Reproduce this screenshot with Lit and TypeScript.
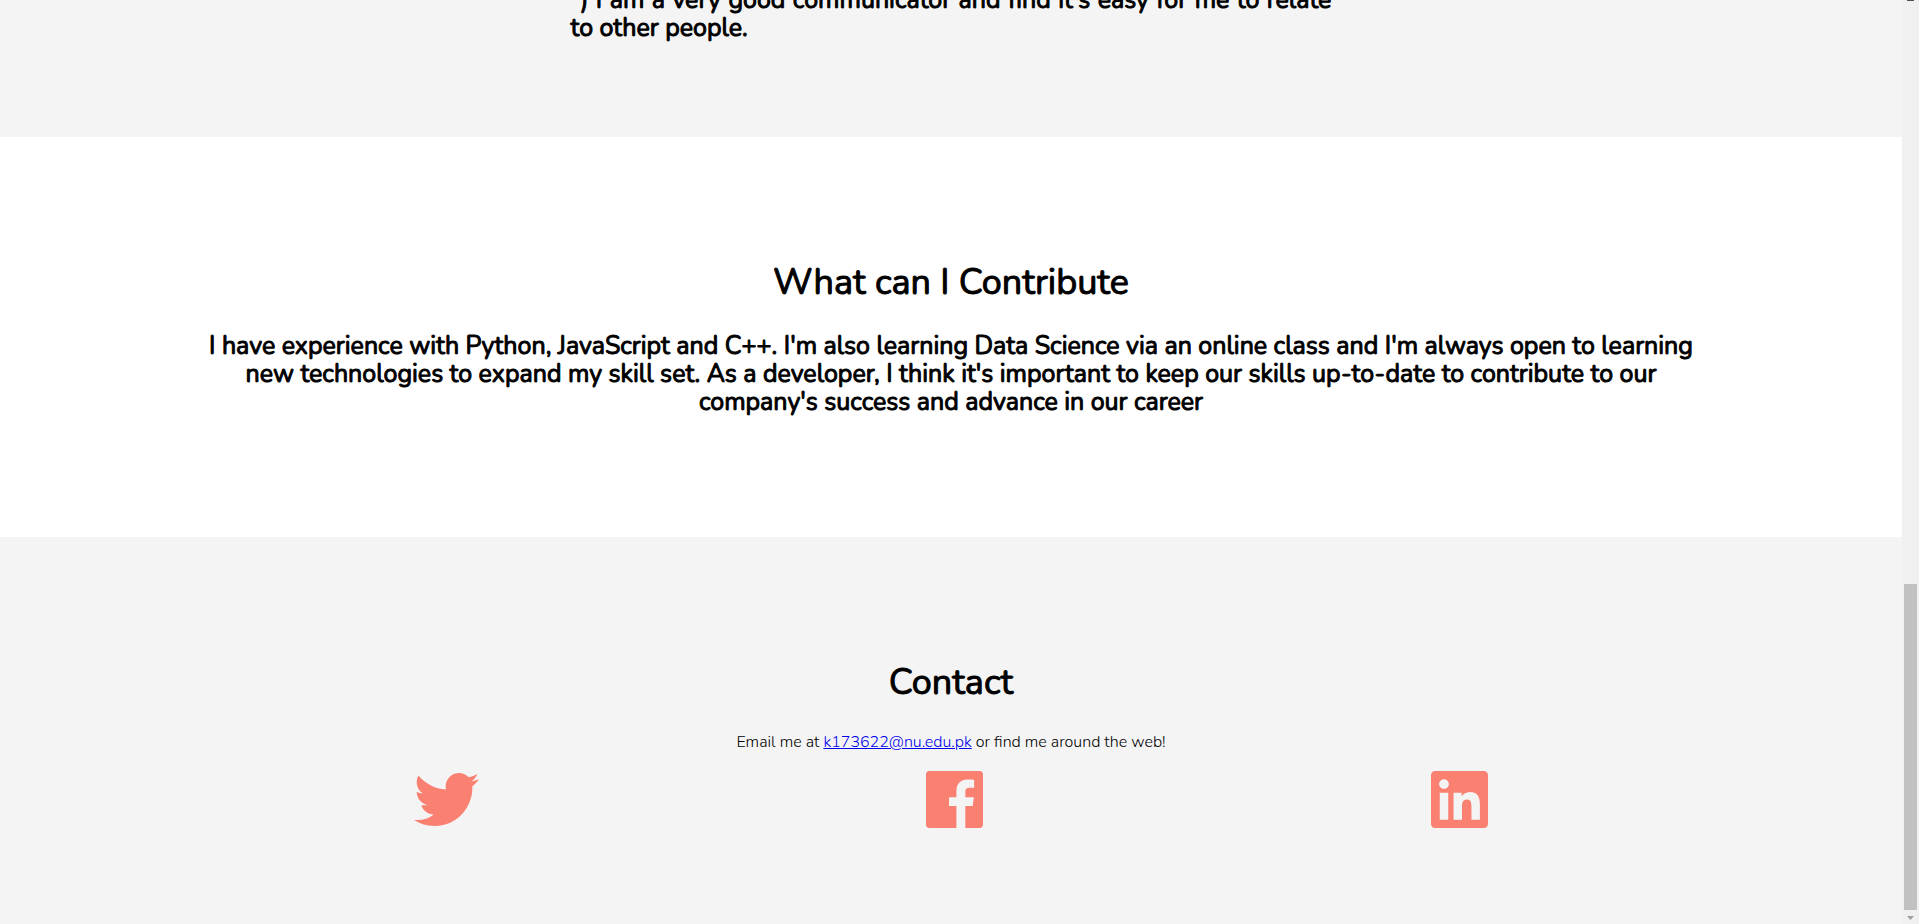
import { LitElement, html, css, svg } from "lit";
import { customElement } from "lit/decorators.js";

interface Social {
  name: string;
  href: string;
  kind: string;
  viewBox: string;
  path: string;
}

const SOCIALS: Social[] = [
  {
    name: "Twitter",
    href: "#twitter",
    kind: "bird",
    viewBox: "0 48 512 416",
    path: "M459.37 151.716c.325 4.548.325 9.097.325 13.645 0 138.72-105.583 298.558-298.558 298.558-59.452 0-114.68-17.219-161.137-47.106 8.447.974 16.568 1.299 25.34 1.299 49.055 0 94.213-16.568 130.274-44.832-46.132-.975-84.792-31.188-98.112-72.772 6.498.974 12.995 1.624 19.818 1.624 9.421 0 18.843-1.3 27.614-3.573-48.081-9.747-84.143-51.98-84.143-102.985v-1.299c13.969 7.797 30.214 12.67 47.431 13.319-28.264-18.843-46.781-51.005-46.781-87.391 0-19.492 5.197-37.36 14.294-52.954 51.655 63.675 129.3 105.258 216.365 109.807-1.624-7.797-2.599-15.918-2.599-24.04 0-57.828 46.782-104.934 104.934-104.934 30.213 0 57.502 12.67 76.67 33.137 23.715-4.548 46.456-13.32 66.599-25.34-7.798 24.366-24.366 44.833-46.132 57.827 21.117-2.273 41.584-8.122 60.426-16.243-14.292 20.791-32.161 39.308-52.628 54.253z",
  },
  {
    name: "Facebook",
    href: "#facebook",
    kind: "square",
    viewBox: "0 32 448 448",
    path: "M448 56.7v398.5c0 13.7-11.1 24.7-24.7 24.7H309.1V306.5h58.2l8.7-67.6h-67v-43.2c0-19.6 5.4-32.9 33.5-32.9h35.8v-60.5c-6.2-.8-27.4-2.7-52.2-2.7-51.6 0-87 31.5-87 89.4v49.9h-58.4v67.6h58.4V480H24.7C11.1 480 0 468.9 0 455.3V56.7C0 43.1 11.1 32 24.7 32h398.5c13.7 0 24.8 11.1 24.8 24.7z",
  },
  {
    name: "LinkedIn",
    href: "#linkedin",
    kind: "square",
    viewBox: "0 32 448 448",
    path: "M416 32H31.9C14.3 32 0 46.5 0 64.3v383.4C0 465.5 14.3 480 31.9 480H416c17.6 0 32-14.5 32-32.3V64.3c0-17.8-14.4-32.3-32-32.3zM135.4 416H69V202.2h66.5V416zm-33.2-243c-21.3 0-38.5-17.3-38.5-38.5S80.9 96 102.2 96c21.2 0 38.5 17.3 38.5 38.5 0 21.3-17.2 38.5-38.5 38.5zm282.1 243h-66.4V312c0-24.8-.5-56.7-34.5-56.7-34.6 0-39.9 27-39.9 54.9V416h-66.4V202.2h63.7v29.2h.9c8.9-16.8 30.6-34.5 62.9-34.5 67.2 0 79.7 44.3 79.7 101.9V416z",
  },
];

@customElement("app-root")
export class AppRoot extends LitElement {
  static styles = css`
    :host {
      display: flex;
      height: 100vh;
      overflow: hidden;
      background: #fff;
      color: #000;
      font-family: "Nunito", "Open Sans", sans-serif;
      font-weight: 300;
      font-size: 16px;
      line-height: 20px;
    }

    /* The page rests at the end of its scroll range. */
    main {
      flex: 1;
      min-width: 0;
      display: flex;
      flex-direction: column;
      justify-content: flex-end;
      overflow: hidden;
    }

    section {
      flex: none;
      padding: 5% 10%;
      text-align: center;
    }

    .tinted {
      background: #f4f4f4;
    }

    .about {
      padding: 5% 30%;
      text-align: justify;
    }

    h2,
    .lead {
      font-weight: 400;
      -webkit-text-stroke: 1px currentColor;
    }

    h2 {
      margin: 31px 0 29px;
      font-size: 36px;
      line-height: 40px;
    }

    .lead {
      margin: 0 0 26px;
      font-size: 25px;
      line-height: 28px;
    }

    .about .lead {
      margin: 0;
    }

    .email {
      margin: 0 0 16px;
    }

    .email a {
      color: #0000ee;
    }

    .socials {
      display: flex;
      justify-content: space-around;
      align-items: center;
      margin: 0;
      padding: 3px 0 1px;
      list-style: none;
    }

    .socials a {
      display: block;
      color: salmon;
    }

    .icon {
      display: block;
      fill: currentColor;
    }

    .bird {
      width: 65px;
      height: 53px;
    }

    .square {
      width: 57px;
      height: 57px;
    }

    .scrollbar {
      flex: none;
      width: 17px;
      display: flex;
      flex-direction: column;
      align-items: center;
      background: #f0f0f0;
    }

    .up {
      width: 7px;
      height: 1px;
      background: #505050;
    }

    .track {
      flex: 1;
      align-self: stretch;
      display: grid;
      grid-template-rows: 583fr 326fr;
      padding: 0 2px;
    }

    .thumb {
      grid-row: 2;
      background: #c1c1c1;
    }

    .down {
      display: block;
      width: 7px;
      height: 4px;
      padding: 6px 0 4px;
      fill: #a0a0a0;
    }
  `;

  render() {
    return html`
      <main>
        <section class="tinted about">
          <p class="lead">
            ") I am a very good communicator and find it's easy for me to relate
            to other people.
          </p>
        </section>

        <section>
          <h2>What can I Contribute</h2>
          <p class="lead">
            I have experience with Python, JavaScript and C++. I'm also learning
            Data Science via an online class and I'm always open to learning new
            technologies to expand my skill set. As a developer, I think it's
            important to keep our skills up-to-date to contribute to our
            company's success and advance in our career
          </p>
        </section>

        <section class="tinted">
          <h2>Contact</h2>
          <p class="email">
            Email me at
            <a href="mailto:k173622@nu.edu.pk">k173622@nu.edu.pk</a> or find me
            around the web!
          </p>
          <ul class="socials">
            ${SOCIALS.map(
              (s) => html`<li>
                <a href=${s.href} aria-label=${s.name}>
                  <svg class="icon ${s.kind}" viewBox=${s.viewBox} aria-hidden="true">
                    ${svg`<path d=${s.path}></path>`}
                  </svg>
                </a>
              </li>`
            )}
          </ul>
        </section>
      </main>

      <div class="scrollbar" aria-hidden="true">
        <div class="up"></div>
        <div class="track"><div class="thumb"></div></div>
        <svg class="down" viewBox="0 0 7 4"><path d="M0 0h7L3.5 4z"></path></svg>
      </div>
    `;
  }
}
